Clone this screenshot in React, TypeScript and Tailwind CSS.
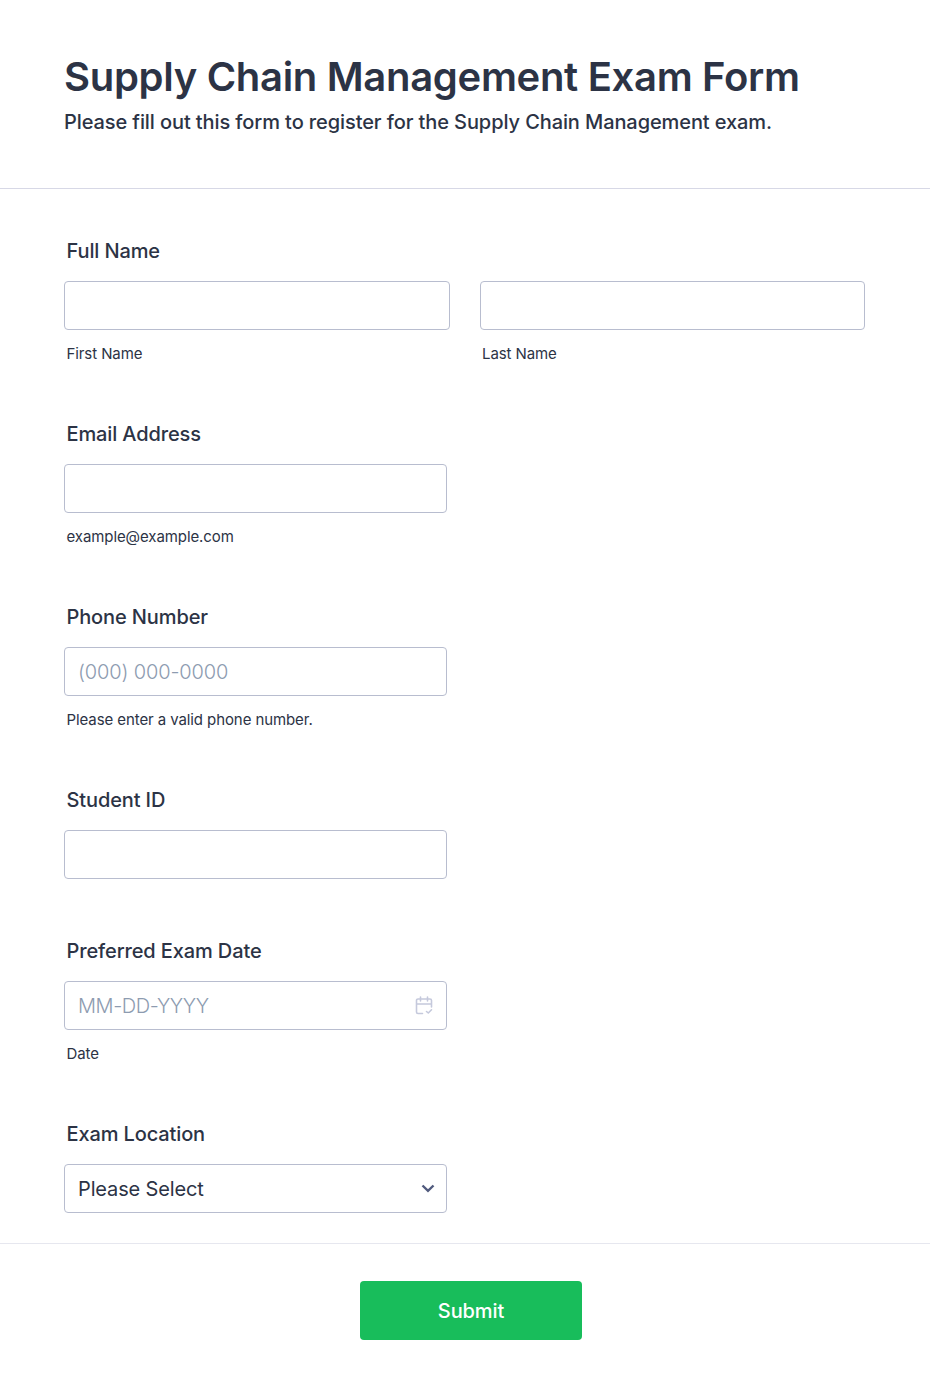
import type { ReactNode } from 'react'

interface FieldProps {
  label: string
  hint?: string
  className?: string
  children: ReactNode
}

const inputClass =
  'block h-[49px] w-full rounded-[4px] border border-[#b8bdcf] bg-white px-[13px] text-[20px] tracking-[-0.14px] text-[#2c3345] outline-none placeholder:font-light placeholder:text-[#8d9bb0]'

const labelClass = 'mb-[18px] block pl-[2.5px] text-[20px] font-medium leading-[24px] tracking-[-0.12px]'

function Hint({ children }: { children: ReactNode }) {
  return (
    <span className="mt-[14px] block pl-[2.5px] text-[15px] leading-[20px] tracking-[-0.09px]">{children}</span>
  )
}

function Field({ label, hint, className = 'h-[183px]', children }: FieldProps) {
  return (
    <div className={className}>
      <label className={labelClass}>{label}</label>
      <div className="w-[383px]">
        {children}
        {hint && <Hint>{hint}</Hint>}
      </div>
    </div>
  )
}

function CalendarIcon() {
  return (
    <svg
      className="absolute right-[14px] top-[15px] h-[19px] w-[18px]"
      viewBox="0 0 18 19"
      fill="none"
      stroke="#c5c9dc"
      strokeWidth="1.6"
      strokeLinecap="round"
      strokeLinejoin="round"
    >
      <path d="M7.500 17.500H3a1.500 1.500 0 0 1-1.500-1.500V4.500A1.500 1.500 0 0 1 3 3h12a1.500 1.500 0 0 1 1.500 1.500V11M1.500 8h15M5.500 1v4M12.500 1v4M11.500 15.500l1.800 1.500 3.200-3.200" />
    </svg>
  )
}

export default function App() {
  return (
    <form className="h-[1390px] w-[930px] bg-white font-['Inter',sans-serif] text-[#2c3345]">
      <header className="h-[189px] border-b border-[#d7d8e6] pl-[64px] pt-[52px]">
        <h1 className="text-[40px] font-semibold leading-[50px] tracking-[-0.31px]">
          Supply Chain Management Exam Form
        </h1>
        <p className="mt-[8px] text-[20px] font-medium leading-[24px] tracking-[-0.095px]">
          Please fill out this form to register for the Supply Chain Management exam.
        </p>
      </header>

      <main className="h-[1055px] border-b border-[#e6e7ef] pl-[64px] pt-[50px]">
        <div className="h-[183px]">
          <label className={labelClass}>Full Name</label>
          <div className="flex gap-[30px]">
            <div className="w-[385.5px]">
              <input className={inputClass} aria-label="First Name" />
              <Hint>First Name</Hint>
            </div>
            <div className="w-[385.5px]">
              <input className={inputClass} aria-label="Last Name" />
              <Hint>Last Name</Hint>
            </div>
          </div>
        </div>
        <Field label="Email Address" hint="example@example.com">
          <input className={inputClass} type="email" />
        </Field>
        <Field label="Phone Number" hint="Please enter a valid phone number.">
          <input className={inputClass} type="tel" placeholder="(000) 000-0000" />
        </Field>
        <Field label="Student ID" className="h-[151px]">
          <input className={inputClass} />
        </Field>
        <Field label="Preferred Exam Date" hint="Date">
          <div className="relative">
            <input className={`${inputClass} placeholder:tracking-[-0.4px]`} placeholder="MM-DD-YYYY" />
            <CalendarIcon />
          </div>
        </Field>
        <Field label="Exam Location">
          <div className="relative">
            <select className={`${inputClass} appearance-none`}>
              <option>Please Select</option>
            </select>
            <svg
              className="absolute right-[12px] top-[20px] h-[9px] w-[14px]"
              viewBox="0 0 14 9"
              fill="none"
              stroke="#515b7e"
              strokeWidth="2.4"
            >
              <path d="M1.500 1.500 7 6.800l5.500-5.300" />
            </svg>
          </div>
        </Field>
      </main>

      <footer className="flex justify-center pl-[12px] pt-[37px]">
        <button
          type="button"
          className="h-[59px] w-[222px] rounded-[4px] bg-[#18bd5b] text-[20px] font-medium tracking-[-0.1px] text-white"
        >
          Submit
        </button>
      </footer>
    </form>
  )
}
